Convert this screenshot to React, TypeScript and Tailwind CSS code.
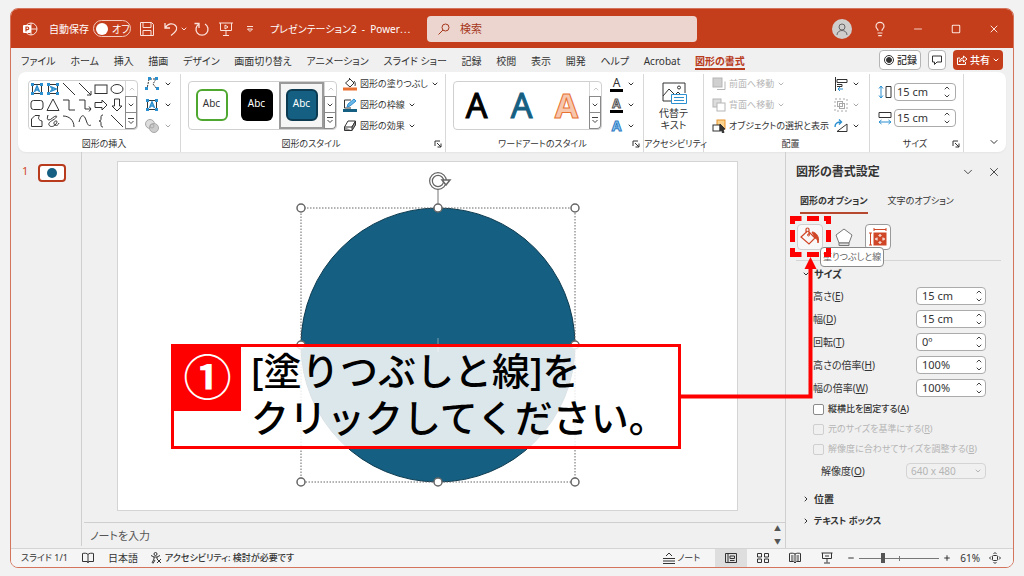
import { useState } from "react";
import type { ReactNode } from "react";
import { ChevronDown, ChevronRight, ChevronUp, Lightbulb, Minus, Plus, Square, X } from "lucide-react";

interface IconProps {
  children: ReactNode;
  className?: string;
  box?: number;
}

function Icon({ children, className = "h-4 w-4", box = 16 }: IconProps) {
  return (
    <svg
      viewBox={`0 0 ${box} ${box}`}
      className={`shrink-0 ${className}`}
      fill="none"
      stroke="currentColor"
      strokeWidth={1}
      aria-hidden="true"
    >
      {children}
    </svg>
  );
}

function Caret({ className = "" }: { className?: string }) {
  return <ChevronDown className={`h-2 w-2 shrink-0 ${className}`} strokeWidth={3} />;
}

const TABS = [
  "ファイル",
  "ホーム",
  "挿入",
  "描画",
  "デザイン",
  "画面切り替え",
  "アニメーション",
  "スライド ショー",
  "記録",
  "校閲",
  "表示",
  "開発",
  "ヘルプ",
  "Acrobat",
  "図形の書式",
];

const textBoxDots = (
  <g fill="#2b8fd0" stroke="none">
    <rect x="2" y="2" width="3" height="3" />
    <rect x="11" y="2" width="3" height="3" />
    <rect x="2" y="11" width="3" height="3" />
    <rect x="11" y="11" width="3" height="3" />
  </g>
);

const SHAPES: { name: string; art: ReactNode }[] = [
  {
    name: "テキスト ボックス",
    art: (
      <>
        <rect x="3.5" y="3.5" width="9" height="9" />
        <path d="M5.5 11 8 5l2.500 6M6.500 9h3" stroke="#2b8fd0" strokeWidth="1.6" />
        {textBoxDots}
      </>
    ),
  },
  {
    name: "縦書きテキスト ボックス",
    art: (
      <>
        <rect x="3.5" y="3.5" width="9" height="9" />
        <path d="M5 5.500 11 8l-6 2.500M7 6.500v3" stroke="#2b8fd0" strokeWidth="1.6" />
        {textBoxDots}
      </>
    ),
  },
  { name: "線", art: <path d="m2 2 12 12" /> },
  { name: "線矢印", art: <path d="m2 2 12 12M14 10v4h-4" /> },
  { name: "正方形/長方形", art: <rect x="2" y="4" width="12" height="8.500" /> },
  { name: "楕円", art: <ellipse cx="8" cy="8" rx="6" ry="4.500" /> },
  { name: "角丸四角形", art: <rect x="2" y="3.500" width="12" height="9" rx="2.500" /> },
  { name: "三角形", art: <path d="m8 2 6 11.500H2Z" /> },
  { name: "コネクタ: カギ線", art: <path d="M2 3h6v10h6" /> },
  { name: "コネクタ: カギ線矢印", art: <path d="M2 3h6v9h6M12 9.500l2 2.500-2 2.500" /> },
  { name: "矢印: 右", art: <path d="M2 5.500h7V3l5 5-5 5v-2.500H2Z" /> },
  { name: "矢印: 下", art: <path d="M5.500 2v7H3l5 5 5-5h-2.500V2Z" /> },
  { name: "フリーフォーム: 図形", art: <path d="M2.500 6 6 2.500h4.500C9 5 9 7 13 8v5.500H2.500Z" /> },
  {
    name: "フリーフォーム: フリーハンド",
    art: <path d="M3 2c-1 3-1 5 1 5s5-4 7-4-1 3-3 4-5 3-4 5 4 2 6 0 3-4 1-4-3 3-1 4 3 0 4-2" />,
  },
  { name: "円弧", art: <path d="M2 3c6 0 11 4 11 11" /> },
  { name: "曲線", art: <path d="M2 9c2-8 5-8 7-2s3 6 5 5" /> },
  { name: "左中かっこ", art: <path d="M10 2c-2 0-2 1-2 3s0 3-2 3c2 0 2 1 2 3s0 3 2 3" /> },
  { name: "直線コネクタ", art: <path d="m2 2 12 12" /> },
];

function GalleryScroll() {
  return (
    <div className="flex w-3 shrink-0 flex-col text-[#444]">
      <button aria-label="前の行" className="flex flex-1 items-center justify-center border-l border-[#d6d6d6] text-[#aaa]">
        <ChevronUp className="h-2 w-2" strokeWidth={2} />
      </button>
      <button aria-label="次の行" className="flex flex-1 items-center justify-center border border-[#8a8a8a]">
        <Caret />
      </button>
      <button aria-label="その他" className="flex flex-1 items-center justify-center rounded-br border border-t-0 border-[#8a8a8a]">
        <Icon className="h-2 w-2" box={8}>
          <path d="M1 1.500h6M1.500 4 4 6.500 6.500 4" />
        </Icon>
      </button>
    </div>
  );
}

function Group({
  label,
  className,
  launcher,
  children,
}: {
  label: string;
  className: string;
  launcher?: boolean;
  children: ReactNode;
}) {
  return (
    <section className={`flex shrink-0 flex-col border-r border-[#d8d8d8] ${className}`}>
      <div className="flex h-[62px] items-center">{children}</div>
      <div className="flex h-4 items-center">
        <span className="flex-1 whitespace-nowrap text-center">{label}</span>
        {launcher && (
          <button aria-label={`${label}の詳細`} className="flex-none">
            <Icon className="h-2 w-2" box={8}>
              <path d="M1 6V1h5M3 3l4 4M7 3.500V7H3.500" />
            </Icon>
          </button>
        )}
      </div>
    </section>
  );
}

function RibbonButton({ icon, label, disabled, caret = true }: { icon: ReactNode; label: string; disabled?: boolean; caret?: boolean }) {
  return (
    <button disabled={disabled} className="flex h-[21px] items-center gap-[3px] whitespace-nowrap disabled:text-[#b5b5b5]">
      {icon}
      {label}
      {caret && <Caret />}
    </button>
  );
}

function IconMenu({ label, disabled, children }: { label: string; disabled?: boolean; children: ReactNode }) {
  return (
    <button aria-label={label} disabled={disabled} className="flex h-[21px] items-center gap-1 disabled:text-[#a8a8a8]">
      {children}
      <Caret />
    </button>
  );
}

function Spinner({ id, value, className }: { id: string; value: string; className: string }) {
  const [text, setText] = useState(value);
  return (
    <div className={`flex items-center rounded border border-[#ababab] bg-white ${className}`}>
      <input
        id={id}
        value={text}
        onChange={(e) => setText(e.target.value)}
        className="w-full min-w-0 flex-1 bg-transparent outline-none"
      />
      <span className="flex flex-col text-[#444]">
        <button aria-label="増やす">
          <ChevronUp className="h-2 w-2" strokeWidth={3} />
        </button>
        <button aria-label="減らす">
          <Caret />
        </button>
      </span>
    </div>
  );
}

function TitleBar() {
  return (
    <header className="flex h-[39px] shrink-0 items-center bg-[#c43e1c] text-[#fbe3dc]">
      <div className="flex w-[416px] shrink-0 items-center pl-[11px]">
        <Icon className="h-4 w-4">
          <circle cx="9" cy="8" r="6" />
          <path d="M9 2v12M9 8h6" />
          <rect x="1" y="4" width="8" height="8" rx="1" fill="#fff" stroke="none" />
          <path d="M4 10.500V6h1.500a1.300 1.300 0 0 1 0 2.600H4" stroke="#c43e1c" strokeWidth="1.200" />
        </Icon>
        <span className="ml-[11px] shrink-0 text-white">自動保存</span>
        <button
          role="switch"
          aria-checked="false"
          className="ml-1 flex h-[17px] w-[38px] shrink-0 items-center gap-1 whitespace-nowrap rounded-full border border-[#f3c9bd] px-[2px] text-white"
        >
          <span className="h-3 w-3 shrink-0 rounded-full bg-white" />
          オフ
        </button>
        <button aria-label="上書き保存" className="ml-2">
          <Icon>
            <path d="M1.500 1.500h11l2 2v11h-13ZM4 1.500v5h8v-5M4 14.500v-5h8v5" />
          </Icon>
        </button>
        <button aria-label="元に戻す" className="ml-2 flex items-center gap-px">
          <Icon>
            <path d="M2 2v5h5M2 7c3-5 8-5 10.500-2.500S14 10 8 14.500" strokeWidth="1.300" />
          </Icon>
          <Caret />
        </button>
        <button aria-label="繰り返し" className="ml-[6px]">
          <Icon>
            <path d="M5 3a6 6 0 1 0 6 0M5 7V2.500H.5" strokeWidth="1.300" />
          </Icon>
        </button>
        <button aria-label="スライド ショー" className="ml-2">
          <Icon>
            <path d="M1 2h14M2.500 2v7.500h11V2M8 9.500v4.500M5 14.500h6M7 4v4l3-2Z" />
          </Icon>
        </button>
        <button aria-label="クイック アクセスのカスタマイズ" className="ml-3">
          <Icon className="h-2 w-2" box={8}>
            <path d="M1 1.500h6M1.500 4 4 6.500 6.500 4Z" />
          </Icon>
        </button>
        <span className="ml-4 whitespace-pre text-white">プレゼンテーション2  -  Power⋯</span>
      </div>
      <label className="flex h-[26px] w-[270px] items-center gap-[10px] rounded-sm bg-[#edd5cf] px-[11px] text-[#a5371b]">
        <Icon className="h-3 w-3" box={12}>
          <circle cx="7.500" cy="4.500" r="3.500" />
          <path d="M5 7 .5 11.500" />
        </Icon>
        <input aria-label="検索" placeholder="検索" className="min-w-0 flex-1 text-[11px] outline-none placeholder:text-[#a5371b]" />
      </label>
      <div className="ml-auto flex items-center">
        <button aria-label="アカウント" className="flex w-[38px] justify-center">
          <span className="flex h-5 w-5 items-center justify-center rounded-full bg-[#d0cecd] text-[#666]">
            <Icon className="h-4 w-4">
              <circle cx="8" cy="6" r="3" />
              <path d="M3 14c0-6 10-6 10 0" />
            </Icon>
          </span>
        </button>
        <button aria-label="ヒント" className="flex w-[38px] justify-center">
          <Lightbulb className="h-4 w-4" strokeWidth={1.75} />
        </button>
        <button aria-label="最小化" className="flex w-[38px] justify-center">
          <Minus className="h-3 w-3" strokeWidth={1.75} />
        </button>
        <button aria-label="最大化" className="flex w-[38px] justify-center">
          <Square className="h-[10px] w-[10px]" strokeWidth={2.5} />
        </button>
        <button aria-label="閉じる" className="flex w-[38px] justify-center">
          <X className="h-3 w-3" strokeWidth={2} />
        </button>
      </div>
    </header>
  );
}

function TabBar() {
  return (
    <nav className="flex h-6 shrink-0 items-center pl-[10px] pr-[10px]">
      <div className="flex w-[724px] items-center justify-between pt-[3px]">
        {TABS.map((tab) => (
          <button
            key={tab}
            className={
              tab === "図形の書式"
                ? "whitespace-nowrap border-b-2 border-[#b83b1d] font-bold text-[#b83b1d]"
                : "whitespace-nowrap border-b-2 border-transparent"
            }
          >
            {tab}
          </button>
        ))}
      </div>
      <div className="ml-auto flex items-center gap-[7px]">
        <button className="flex h-5 items-center gap-[2px] rounded border border-[#b5b5b5] bg-white px-[3px] font-medium">
          <Icon className="h-3 w-3" box={12}>
            <circle cx="6" cy="6" r="4.500" />
            <circle cx="6" cy="6" r="2.500" fill="currentColor" />
          </Icon>
          記録
        </button>
        <button aria-label="コメント" className="flex h-5 w-[18px] items-center justify-center rounded border border-[#b5b5b5] bg-white">
          <Icon className="h-3 w-3" box={12}>
            <path d="M1.500 2h9v6H6l-2.500 2.500V8h-2Z" />
          </Icon>
        </button>
        <button className="flex h-5 items-center gap-[2px] rounded bg-[#c43e1c] px-[3px] font-medium text-white">
          <Icon className="h-3 w-3" box={12}>
            <path d="M4 4H1.500v6.500h8V8M3.500 8c0-3 2-4 4-4V2l3.500 3-3.500 3V6c-2 0-3 .5-4 2Z" />
          </Icon>
          共有
          <Caret />
        </button>
      </div>
    </nav>
  );
}

function Ribbon() {
  return (
    <div className="mx-[7px] flex h-20 shrink-0 rounded-lg bg-white pt-[2px] text-[9px] shadow-xs">
      <Group label="図形の挿入" className="w-[163px] pl-[10px]">
        <div className="flex h-[50px] rounded border border-[#d0d0d0]">
          <div className="grid grid-cols-6">
            {SHAPES.map((shape) => (
              <button key={shape.name} aria-label={shape.name} className="h-4 w-4">
                <Icon>{shape.art}</Icon>
              </button>
            ))}
          </div>
          <GalleryScroll />
        </div>
        <div className="ml-[6px] flex flex-col">
          <IconMenu label="図形の編集">
            <Icon>
              <path d="M5 3 3 13M6 3h6L9 8l4 5" strokeDasharray="2 1" />
              <g fill="#2b8fd0" stroke="none">
                <rect x="4" y="1" width="3" height="3" />
                <rect x="11" y="1" width="3" height="3" />
                <rect x="1" y="11" width="3" height="3" />
                <rect x="12" y="11" width="3" height="3" />
              </g>
            </Icon>
          </IconMenu>
          <IconMenu label="テキスト ボックス">
            <Icon>{SHAPES[0].art}</Icon>
          </IconMenu>
          <IconMenu label="図形の結合" disabled>
            <Icon>
              <circle cx="6" cy="6" r="4.500" fill="#ddd" />
              <circle cx="10" cy="10" r="4.500" fill="#ccc" />
              <circle cx="8" cy="8" r="2" />
            </Icon>
          </IconMenu>
        </div>
      </Group>

      <Group label="図形のスタイル" className="w-[265px] pl-[7px] pr-[3px]" launcher>
        <div className="flex h-[49px] w-[149px] rounded border border-[#d0d0d0]">
          <div className="flex flex-1 text-[10px]">
            <button className="flex w-[45px] items-center justify-center">
              <span className="flex h-8 w-8 items-center justify-center rounded-md border-2 border-[#4ea72e] pb-1">Abc</span>
            </button>
            <button className="flex w-[45px] items-center justify-center">
              <span className="flex h-8 w-8 items-center justify-center rounded-md bg-black pb-1 text-white">Abc</span>
            </button>
            <button className="flex w-[45px] items-center justify-center border-2 border-[#9a9a9a] bg-[#f5f5f5]">
              <span className="flex h-8 w-8 shrink-0 items-center justify-center rounded-md border-2 border-[#0c3a50] bg-[#156082] pb-1 text-white">
                Abc
              </span>
            </button>
          </div>
          <GalleryScroll />
        </div>
        <div className="ml-[6px] flex flex-col">
          <RibbonButton
            label="図形の塗りつぶし"
            icon={
              <Icon className="h-[14px] w-[14px]" box={14}>
                <path d="m6 1 5 5-4 4-4.500-4L7 2M11 4c2 2 1 4 1 5" />
                <path d="M0 12h14" stroke="#e97132" strokeWidth="3" />
              </Icon>
            }
          />
          <RibbonButton
            label="図形の枠線"
            icon={
              <Icon className="h-[14px] w-[14px]" box={14}>
                <path d="M8 2H1.500v8H8" />
                <path d="m4 9 1-3 6-5 2 2-6 5Z" fill="#6db8e8" stroke="#2b8fd0" />
                <path d="M0 12.500h14" stroke="#156082" strokeWidth="3" />
              </Icon>
            }
          />
          <RibbonButton
            label="図形の効果"
            icon={
              <Icon className="h-[14px] w-[14px]" box={14}>
                <path d="M5 2h7.500L9 8H1.500Z" />
                <path d="M1.500 8v3.500H9L12.500 6V2L9 8v3.500" fill="#999" />
              </Icon>
            }
          />
        </div>
      </Group>

      <Group label="ワードアートのスタイル" className="w-[198px] pl-[7px] pr-[3px]" launcher>
        <div className="flex h-[49px] w-[149px] rounded border border-[#d0d0d0]">
          <div className="flex flex-1 items-center text-[34px] leading-[46px]">
            <button className="flex-1 text-black [-webkit-text-stroke:1px_#000]">A</button>
            <button className="flex-1 text-[#156082] [-webkit-text-stroke:1px_#156082]">A</button>
            <button className="flex-1 font-bold text-[#f6c6ad] [-webkit-text-stroke:1px_#e97132]">A</button>
          </div>
          <GalleryScroll />
        </div>
        <div className="ml-2 flex flex-col">
          <IconMenu label="文字の塗りつぶし">
            <span className="w-[13px] border-b-[3px] border-black text-center text-[12px] leading-[12px]">A</span>
          </IconMenu>
          <IconMenu label="文字の輪郭">
            <span className="w-[13px] border-b-[3px] border-black text-center text-[12px] font-bold leading-[12px] text-[#ddd] [-webkit-text-stroke:1px_#555]">
              A
            </span>
          </IconMenu>
          <IconMenu label="文字の効果">
            <span className="w-[13px] text-center text-[14px] font-bold leading-[14px] text-[#9fd0f5] [-webkit-text-stroke:1px_#2b7cc4]">A</span>
          </IconMenu>
        </div>
      </Group>

      <Group label="アクセシビリティ" className="w-[60px]">
        <button className="flex flex-1 flex-col items-center text-[10px] leading-[12px]">
          <Icon className="h-7 w-7" box={28}>
            <path d="M12 22H3V4h22v10M3 17l6-7 6 6 3-3 4 4" />
            <circle cx="19" cy="8.500" r="1.500" />
            <path d="M11.500 15.500h15v9h-15ZM14 18.500h10M14 21.500h10" stroke="#2b8fd0" fill="#fff" />
          </Icon>
          <span>
            代替テ
            <br />
            キスト
          </span>
        </button>
      </Group>

      <Group label="配置" className="w-[166px] pl-2">
        <div className="flex w-[122px] flex-col">
          <RibbonButton
            label="前面へ移動"
            disabled
            icon={
              <Icon className="h-[14px] w-[14px]" box={14}>
                <path d="M5 12.500h8v-8" />
                <rect x="1" y="1" width="9" height="9" fill="#d0d0d0" />
              </Icon>
            }
          />
          <RibbonButton
            label="背面へ移動"
            disabled
            icon={
              <Icon className="h-[14px] w-[14px]" box={14}>
                <rect x="1" y="1" width="8" height="8" fill="#ddd" />
                <rect x="5" y="5" width="8" height="8" fill="#fff" />
              </Icon>
            }
          />
          <RibbonButton
            label="オブジェクトの選択と表示"
            caret={false}
            icon={
              <Icon className="h-[14px] w-[14px]" box={14}>
                <rect x="5" y="1" width="8" height="9" fill="#fbd38d" stroke="#e8912d" />
                <rect x="1" y="6" width="7" height="6" fill="#fff" />
                <path d="m8 5 5 5-2 .5 1 3-1.500.5-1-3L8 12Z" fill="#333" />
              </Icon>
            }
          />
        </div>
        <div className="flex flex-col">
          <IconMenu label="配置">
            <Icon className="h-[14px] w-[14px]" box={14}>
              <path d="M1.500 0v14M3 2.500h10v3H3ZM3 7.500h5v2H3" />
              <path d="M9 12H4M6 10l-2 2 2 2" stroke="#2b8fd0" />
            </Icon>
          </IconMenu>
          <IconMenu label="グループ化" disabled>
            <Icon className="h-[14px] w-[14px]" box={14}>
              <rect x="1" y="1" width="12" height="12" strokeDasharray="2 2" />
              <rect x="3.500" y="3.500" width="5" height="5" />
              <rect x="5.500" y="5.500" width="5" height="5" />
            </Icon>
          </IconMenu>
          <IconMenu label="回転">
            <Icon className="h-[14px] w-[14px]" box={14}>
              <path d="M13 5v7.500H3Z" />
              <path d="M1 8c0-4 3-5 6-5M5 .5 7.500 3 5 5.500" stroke="#2b8fd0" strokeWidth="1.400" />
            </Icon>
          </IconMenu>
        </div>
      </Group>

      <Group label="サイズ" className="w-[94px] pl-2 pr-[3px]" launcher>
        <div className="flex flex-col gap-2 text-[11px]">
          <label className="flex items-center gap-[2px]" aria-label="図形の高さ">
            <Icon className="h-[14px] w-[14px]" box={14}>
              <path d="M8 1.500h5v11H8Z" />
              <path d="M3 1v12M1 3.500 3 1l2 2.500M1 10.500 3 13l2-2.500" stroke="#2b8fd0" />
            </Icon>
            <Spinner id="ribbon-height" value="15 cm" className="h-[18px] w-[62px] pl-[2px] pr-1" />
          </label>
          <label className="flex items-center gap-[2px]" aria-label="図形の幅">
            <Icon className="h-[14px] w-[14px]" box={14}>
              <path d="M1 1.500h12v5H1Z" />
              <path d="M1 11h12M3.500 9 1 11l2.500 2M10.500 9 13 11l-2.500 2" stroke="#2b8fd0" />
            </Icon>
            <Spinner id="ribbon-width" value="15 cm" className="h-[18px] w-[62px] pl-[2px] pr-1" />
          </label>
        </div>
      </Group>

      <button aria-label="リボンを折りたたむ" className="mb-1 ml-auto mr-[6px] self-end">
        <ChevronDown className="h-3 w-3" strokeWidth={2} />
      </button>
    </div>
  );
}

const HANDLES = [
  [183, 46],
  [320, 46],
  [457, 46],
  [183, 183],
  [457, 183],
  [183, 320],
  [320, 320],
  [457, 320],
];

function Slide() {
  return (
    <svg viewBox="0 0 619 348" className="block w-full bg-white outline outline-[#d4d4d4]" role="img" aria-label="スライド 1">
      <circle cx="320" cy="183" r="137" fill="#156082" stroke="#0c3a50" />
      <path d="M320 176v14" stroke="#7d9dac" />
      <rect x="183" y="46" width="274" height="274" fill="none" stroke="#666" strokeDasharray="1.500 1.500" />
      <path d="M320 27v16" stroke="#777" />
      {HANDLES.map(([x, y]) => (
        <circle key={`${x}-${y}`} cx={x} cy={y} r="4" fill="#fff" stroke="#666" strokeWidth="1.500" />
      ))}
      <g fill="none" stroke="#666">
        <circle cx="320" cy="19" r="7" strokeWidth="4" />
        <circle cx="320" cy="19" r="7" stroke="#fff" strokeWidth="1.500" />
        <path d="M324 18h8l-4 5Z" fill="#fff" strokeWidth="1.500" />
      </g>
    </svg>
  );
}

const SIZE_FIELDS = [
  { id: "height", label: "高さ", accessKey: "E", value: "15 cm" },
  { id: "width", label: "幅", accessKey: "D", value: "15 cm" },
  { id: "rotation", label: "回転", accessKey: "T", value: "0º" },
  { id: "scale-height", label: "高さの倍率", accessKey: "H", value: "100%" },
  { id: "scale-width", label: "幅の倍率", accessKey: "W", value: "100%" },
];

const SIZE_OPTIONS = [
  { id: "lock-ratio", label: "縦横比を固定する", accessKey: "A", disabled: false },
  { id: "relative", label: "元のサイズを基準にする", accessKey: "R", disabled: true },
  { id: "best-scale", label: "解像度に合わせてサイズを調整する", accessKey: "B", disabled: true },
];

function FormatPane() {
  return (
    <aside className="flex w-[228px] shrink-0 flex-col border-l border-[#cfcfcf] pl-[10px] pr-3 pt-[10px]">
      <div className="flex h-5 items-center">
        <h2 className="flex-1 text-[12px] font-bold">図形の書式設定</h2>
        <button aria-label="作業ウィンドウのオプション" className="mr-3">
          <ChevronDown className="h-[14px] w-[14px]" strokeWidth={1.5} />
        </button>
        <button aria-label="閉じる">
          <X className="h-[14px] w-[14px]" strokeWidth={1.5} />
        </button>
      </div>
      <div className="mt-2 flex gap-5 pl-1 text-[9px]">
        <button className="h-6 whitespace-nowrap border-b-2 border-[#b5482f] font-bold">図形のオプション</button>
        <button className="h-6 whitespace-nowrap border-b-2 border-transparent">文字のオプション</button>
      </div>
      <div className="mt-[10px] flex h-[37px] items-start gap-2 border-b border-[#d4d4d4]">
        <button
          aria-label="塗りつぶしと線"
          className="ml-px flex h-[26px] w-[26px] items-center justify-center rounded border border-[#d0d0d0] bg-[#f8f8f8] text-[#d04727]"
        >
          <Icon className="h-5 w-5" box={20}>
            <path d="m8 4 7 7-6 6-8-7 6.500-6M6 6V2.500a1.500 1.500 0 0 1 3 0V8" strokeWidth="1.200" />
            <circle cx="8.500" cy="8" r="1" />
            <path d="M12 5c4 0 8 5 6 11 0-3-2-5-3-5Z" fill="currentColor" />
          </Icon>
        </button>
        <button aria-label="効果" className="flex h-[26px] w-[26px] items-center justify-center text-[#777]">
          <Icon className="h-5 w-5" box={20}>
            <path d="m10 2 8 6-3 8H5L2 8Z" fill="#fff" />
            <path d="M5 16h10v2.500H5Z" fill="#ddd" />
          </Icon>
        </button>
        <button
          aria-label="サイズとプロパティ"
          className="flex h-[26px] w-[26px] items-center justify-center rounded border border-[#9a9a9a] bg-white text-[#d04727]"
        >
          <Icon className="h-5 w-5" box={20}>
            <path d="M6 2.500h12M6 1v3M18 1v3M2.500 6v12M1 6h3M1 18h3" />
            <rect x="6" y="6" width="12" height="12" fill="currentColor" />
            <path
              d="M12 7.500v2.500M12 14v2.500M7.500 12H10M14 12h2.500M10.500 9 12 7.500 13.500 9M10.500 15l1.500 1.500 1.500-1.500M9 10.500 7.500 12 9 13.500M15 10.500l1.500 1.500-1.500 1.500"
              stroke="#fff"
            />
          </Icon>
        </button>
      </div>

      <button className="mt-[3px] flex h-5 items-center gap-1 pl-[6px] font-bold">
        <ChevronDown className="h-2 w-2" strokeWidth={3} />
        サイズ
      </button>
      <div className="flex flex-col pl-[17px] pr-[15px]">
        {SIZE_FIELDS.map((field) => (
          <div key={field.id} className="flex h-[23px] items-center justify-between">
            <label htmlFor={field.id}>
              {field.label}(<u>{field.accessKey}</u>)
            </label>
            <Spinner id={field.id} value={field.value} className="h-[18px] w-[70px] pl-[5px] pr-[2px] text-[11px]" />
          </div>
        ))}
        {SIZE_OPTIONS.map((option) => (
          <label
            key={option.id}
            className={
              option.disabled
                ? "flex h-5 items-center gap-1 whitespace-nowrap text-[9px] text-[#b5b5b5]"
                : "flex h-5 items-center gap-1 whitespace-nowrap text-[9px] font-medium"
            }
          >
            <input
              type="checkbox"
              disabled={option.disabled}
              className="h-[11px] w-[11px] shrink-0 appearance-none rounded-xs border border-[#8a8a8a] bg-white checked:bg-[#c43e1c] disabled:border-[#cfcfcf] disabled:bg-transparent"
            />
            <span>
              {option.label}(<u>{option.accessKey}</u>)
            </span>
          </label>
        ))}
        <div className="flex h-6 items-center justify-between pl-2">
          <label htmlFor="resolution">
            解像度(<u>O</u>)
          </label>
          <div className="relative">
            <select
              id="resolution"
              disabled
              className="block h-4 w-20 appearance-none rounded border border-[#d4d4d4] pl-1 text-[#b5b5b5]"
            >
              <option>640 x 480</option>
            </select>
            <Caret className="pointer-events-none absolute right-1 top-1 text-[#b5b5b5]" />
          </div>
        </div>
      </div>
      <button className="mt-[5px] flex h-[22px] items-center gap-1 pl-[6px] font-bold">
        <ChevronRight className="h-2 w-2" strokeWidth={3} />
        位置
      </button>
      <button className="flex h-[22px] items-center gap-1 pl-[6px] text-[9px] font-bold">
        <ChevronRight className="h-2 w-2" strokeWidth={3} />
        テキスト ボックス
      </button>
    </aside>
  );
}

function StatusBar() {
  const [zoom, setZoom] = useState(61);
  return (
    <footer className="flex h-[19px] shrink-0 items-center border-t border-[#d4d4d4] bg-[#f5f5f5] pl-[10px] pr-3">
      <span className="text-[9px]">スライド 1/1</span>
      <button aria-label="スペル チェック" className="ml-[14px]">
        <Icon className="h-3 w-3" box={12}>
          <path d="M6 2.500C5 1 2 1 .5 1.500v8h5L6 11l.5-1.500h5v-8C10 1 7 1 6 2.500v7" />
        </Icon>
      </button>
      <button className="ml-[14px]">日本語</button>
      <button className="ml-3 flex items-center gap-[3px] whitespace-nowrap text-[9px] font-medium">
        <Icon className="h-3 w-3" box={12}>
          <circle cx="5.500" cy="2" r="1.500" />
          <path d="M1 3.500 4 5v2l-2 4M10 3.500 7 5v2M4 5h3M5 8l-2 3.500M7 7l4 4M11 7l-4 4" />
        </Icon>
        アクセシビリティ: 検討が必要です
      </button>
      <button className="ml-auto flex items-center gap-px whitespace-nowrap text-[9px]">
        <Icon className="h-[14px] w-[14px]" box={14}>
          <path d="M1 7.500h12M1 10h12M1 12.500h12M4 5l3-3 3 3" />
        </Icon>
        ノート
      </button>
      <div className="ml-[15px] flex h-full items-center">
        <button aria-label="標準" className="flex h-full w-8 items-center justify-center bg-[#dedede]">
          <Icon className="h-3 w-3" box={12}>
            <path d="M.5 1.500h11v9H.5ZM3 1.500v9M5 4h4.500v2.500H5ZM5 8.500h4.500" />
          </Icon>
        </button>
        <button aria-label="スライド一覧" className="flex h-full w-8 items-center justify-center">
          <Icon className="h-3 w-3" box={12}>
            <path d="M.5 1.500h4v3.500h-4ZM7.500 1.500h4v3.500h-4ZM.5 7h4v3.500h-4ZM7.500 7h4v3.500h-4Z" />
          </Icon>
        </button>
        <button aria-label="閲覧表示" className="flex h-full w-8 items-center justify-center">
          <Icon className="h-3 w-3" box={12}>
            <path d="M6 2C4.500 1 2 1 .5 1.500v8h4L6 11l1.500-1.500h4v-8C10 1 7.500 1 6 2v8M2 4h2.500M2 6h2.500M2 8h2.500M7.500 4H10M7.500 6H10M7.500 8H10" />
          </Icon>
        </button>
        <button aria-label="スライド ショー" className="flex h-full w-8 items-center justify-center">
          <Icon className="h-3 w-3" box={12}>
            <path d="M.5 1h11M1.500 1v5.500h9V1M6 6.500v4M3 11h6M4 4h4" />
          </Icon>
        </button>
      </div>
      <button aria-label="縮小" className="ml-1">
        <Minus className="h-2 w-2" strokeWidth={3} />
      </button>
      <input
        type="range"
        aria-label="ズーム"
        min={10}
        max={190}
        value={zoom}
        onChange={(e) => setZoom(Number(e.target.value))}
        className="mx-1 h-[10px] w-20 appearance-none bg-[linear-gradient(#777,#777),linear-gradient(#777,#777)] bg-[length:100%_1px,1px_5px] bg-center bg-no-repeat [&::-webkit-slider-thumb]:h-[10px] [&::-webkit-slider-thumb]:w-1 [&::-webkit-slider-thumb]:appearance-none [&::-webkit-slider-thumb]:bg-[#555]"
      />
      <button aria-label="拡大">
        <Plus className="h-2 w-2" strokeWidth={3} />
      </button>
      <span className="ml-[9px]">{zoom}%</span>
      <button aria-label="ウィンドウに合わせる" className="ml-[9px]">
        <Icon className="h-3 w-3" box={12}>
          <rect x="3.500" y="3.500" width="5" height="5" rx="1" />
          <path d="M4.500 2 6 .5 7.500 2M4.500 10 6 11.500 7.500 10M2 4.500.5 6 2 7.500M10 4.500 11.500 6 10 7.500" />
        </Icon>
      </button>
    </footer>
  );
}

function Callout() {
  return (
    <>
      <div className="absolute left-[820px] top-[247px] rounded border border-[#8a8a8a] bg-white px-[2px] py-px text-[9px] leading-[16px] text-[#666]">
        塗りつぶしと線
      </div>
      <svg className="pointer-events-none absolute left-[680px] top-[214px] h-[190px] w-[155px]" viewBox="0 0 155 190" fill="none" aria-hidden="true">
        <path
          d="M112.500 10V4.500h9M127 4.500h12M144 4.500h4.500V10M148.500 16v12M148.500 34v6.500H144M139 40.500h-12M121.500 40.500h-9V34M112.500 28V16"
          stroke="#f00"
          strokeWidth="5"
        />
        <path d="M0 182.500h130.500V54" stroke="#f00" strokeWidth="4" />
        <path d="m130.500 43 6 12h-12Z" fill="#f00" />
      </svg>
      <div className="absolute left-[171px] top-[344px] flex h-[105px] w-[510px] border-[3px] border-[#f00] bg-white/85">
        <span className="flex h-16 w-[67px] items-center justify-center bg-[#f00] pb-1 text-[48px] font-bold leading-none text-white">①</span>
        <p className="ml-[10px] whitespace-nowrap text-[38px] font-medium leading-[47px] text-black [font-feature-settings:normal]">
          [塗りつぶしと線]を
          <br />
          クリックしてください。
        </p>
      </div>
    </>
  );
}

export default function App() {
  return (
    <div className="relative flex min-h-screen flex-col bg-[#f2f2f2] px-[10px] pb-2 pt-2 font-['Noto_Sans','Noto_Sans_CJK_JP',sans-serif] text-[10px] leading-[14px] text-[#333] [font-feature-settings:'palt']">
      <div className="flex flex-1 flex-col overflow-hidden rounded-lg border border-[#d4745c] bg-[#f0f0f0]">
        <TitleBar />
        <TabBar />
        <Ribbon />
        <main className="flex flex-1">
          <div className="mb-[2px] flex w-[71px] shrink-0 items-start gap-[10px] border-r border-[#cfcfcf] pl-[11px] pt-3">
            <span className="text-[11px] text-[#d04727]">1</span>
            <button aria-label="スライド 1" className="flex h-[18px] w-[28px] items-center justify-center rounded border-2 border-[#b83b1d] bg-white">
              <span className="h-[10px] w-[10px] rounded-full bg-[#156082]" />
            </button>
          </div>
          <div className="flex min-w-0 flex-1 flex-col">
            <div className="flex-1 pl-9 pr-12 pt-[10px]">
              <Slide />
            </div>
            <div className="ml-[2px] flex h-[26px] shrink-0 items-center border-t border-[#cfcfcf] pl-[6px]">
              <input aria-label="ノート" placeholder="ノートを入力" className="flex-1 text-[11px] outline-none placeholder:text-[#555]" />
              <span className="flex h-full flex-col items-center justify-around px-1 text-[7px] leading-[8px] text-[#555]">
                <button aria-label="上へスクロール">▲</button>
                <button aria-label="下へスクロール">▼</button>
              </span>
            </div>
          </div>
          <FormatPane />
        </main>
        <StatusBar />
      </div>
      <Callout />
    </div>
  );
}
